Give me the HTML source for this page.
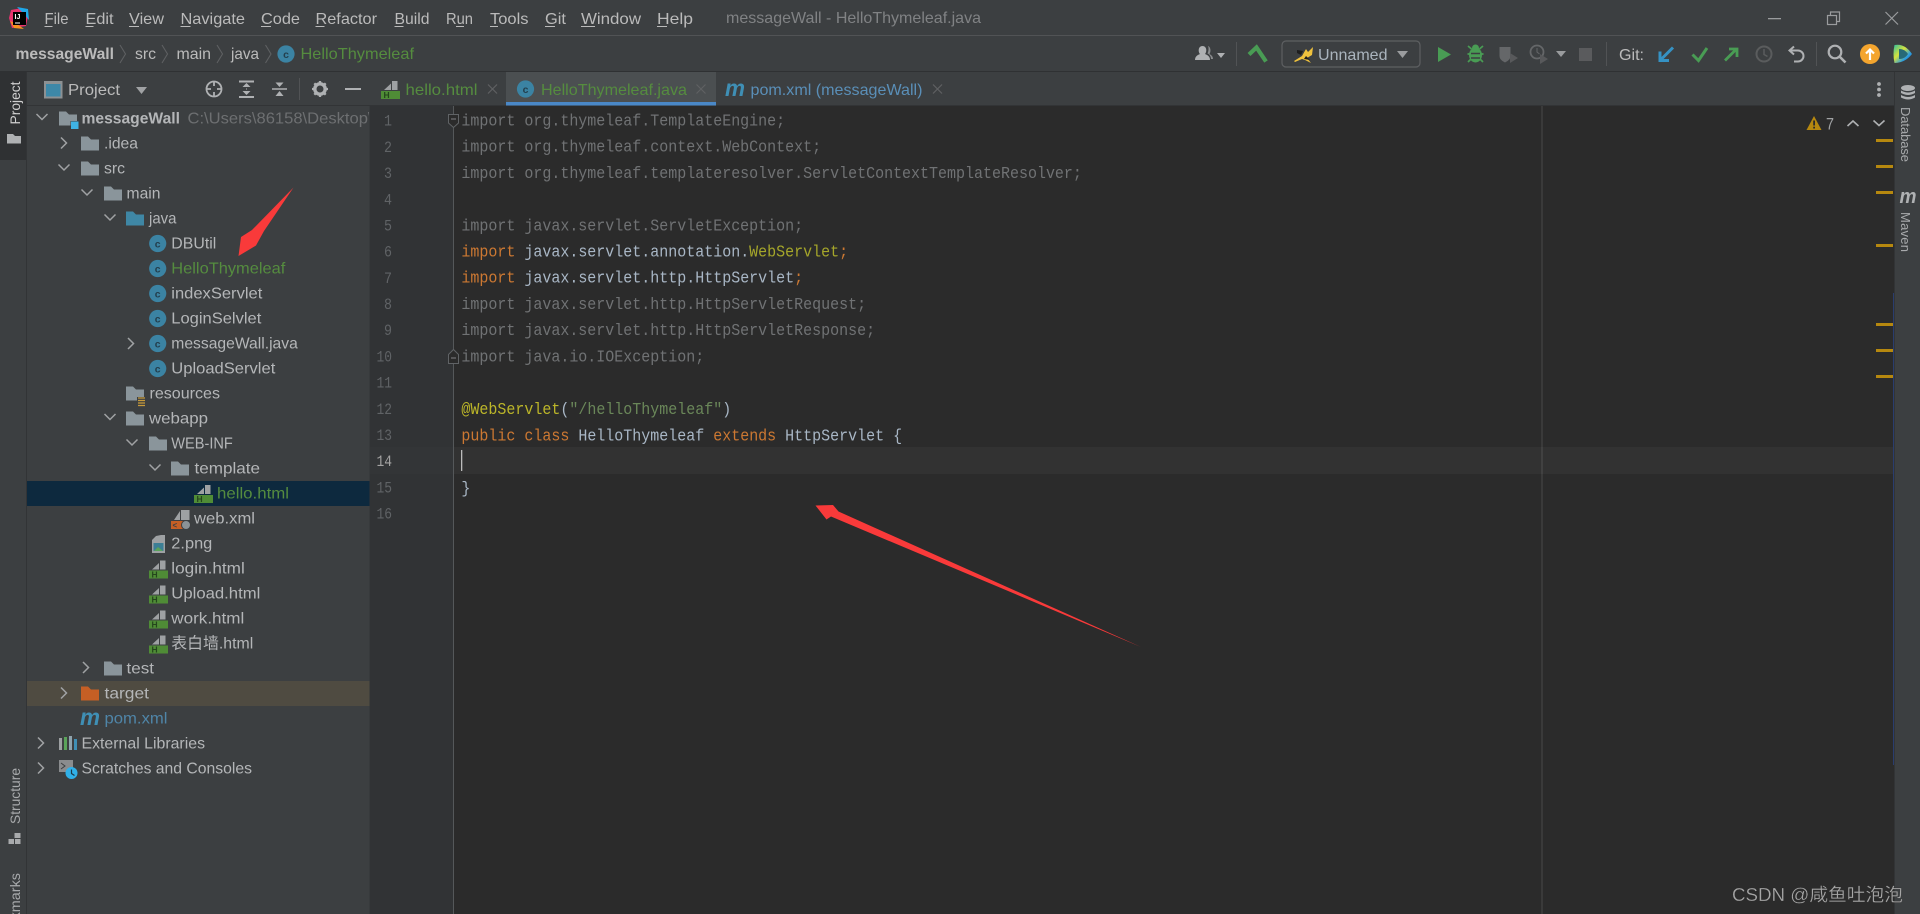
<!DOCTYPE html>
<html><head><meta charset="utf-8"><title>messageWall - HelloThymeleaf.java</title>
<style>
html,body{margin:0;padding:0;width:1920px;height:914px;overflow:hidden;background:#3c3f41}
svg{display:block;position:absolute;left:0;top:0}
text{font-family:"Liberation Sans","Noto Sans CJK SC",sans-serif;white-space:pre}
.m{font-size:16px;fill:#bbbbbb}
.t{font-size:16px;fill:#b4b6b8}
.g{fill:#558c3f}
.n{font-family:"Liberation Mono",monospace;font-size:16px;fill:#606366}
.c{font-family:"Liberation Mono",monospace;font-size:17px;fill:#707274}
.o{fill:#cc7832}.w{fill:#a9b7c6}.y{fill:#a5a62a}.s{fill:#6a8759}.b{fill:#bbb529}
</style></head><body>
<svg width="1920" height="914" viewBox="0 0 1920 914" xmlns="http://www.w3.org/2000/svg">
<defs>
<path id="fo" d="M0 0h7l3 3h8v11H0z"/>
<polyline id="cr" points="-3,-5.5 2.5,0 -3,5.5" fill="none" stroke="#a0a2a4" stroke-width="1.5"/>
<polyline id="cd" points="-5.5,-3 0,2.5 5.5,-3" fill="none" stroke="#a0a2a4" stroke-width="1.5"/>
<g id="ci"><circle r="8.6" fill="#3b83a3"/><text y="3.8" text-anchor="middle" font-size="10.5" fill="#233f4d" font-weight="bold">c</text></g>
<g id="ht"><path d="M3 9L10 2.500V9zM11 0h5.500v9H11z" fill="#9ea1a3"/><rect y="10" width="19" height="8" fill="#4f8c36"/><text x="2.500" y="17.200" font-size="8.500" font-weight="bold" fill="#24461c">H</text></g>
<path id="xx" d="M-4.500 -4.500L4.500 4.500M4.500 -4.500L-4.500 4.500" stroke="#5f6163" stroke-width="1.200" fill="none"/>
<linearGradient id="gr" x1="0" y1="0" x2="1" y2="1"><stop offset="0" stop-color="#2fc0a0"/><stop offset=".4" stop-color="#d6e23c"/><stop offset=".7" stop-color="#2a9be0"/><stop offset="1" stop-color="#1a70c8"/></linearGradient>
</defs>

<!-- base -->
<rect width="1920" height="914" fill="#3c3f41"/>
<rect x="0" y="35" width="1920" height="1" fill="#515355"/>
<rect x="0" y="71" width="1920" height="1" fill="#2f3133"/>

<!-- app logo -->
<g>
<path d="M11 10L22 8 28 16 26 26 12 28 9 18z" fill="#e8336e"/>
<path d="M17 7L28 9 29 20 24 14z" fill="#1ea7e8"/>
<path d="M10 21L14 28 24 29 17 24z" fill="#f7931e"/>
<rect x="13" y="12" width="13" height="13" fill="#000"/>
<text x="14.500" y="19" font-size="7" font-weight="bold" fill="#fff">IJ</text>
<rect x="15" y="22.500" width="5" height="1" fill="#fff"/>
</g>

<!-- menu -->
<text x="44.500" y="24" textLength="24" lengthAdjust="spacingAndGlyphs" class="m">File</text>
<text x="85.500" y="24" textLength="28" lengthAdjust="spacingAndGlyphs" class="m">Edit</text>
<text x="129" y="24" textLength="35" lengthAdjust="spacingAndGlyphs" class="m">View</text>
<text x="180.500" y="24" textLength="64.500" lengthAdjust="spacingAndGlyphs" class="m">Navigate</text>
<text x="261" y="24" textLength="39" lengthAdjust="spacingAndGlyphs" class="m">Code</text>
<text x="315.500" y="24" textLength="61.500" lengthAdjust="spacingAndGlyphs" class="m">Refactor</text>
<text x="394.500" y="24" textLength="35" lengthAdjust="spacingAndGlyphs" class="m">Build</text>
<text x="446" y="24" textLength="27" lengthAdjust="spacingAndGlyphs" class="m">Run</text>
<text x="490" y="24" textLength="38.500" lengthAdjust="spacingAndGlyphs" class="m">Tools</text>
<text x="545" y="24" textLength="21" lengthAdjust="spacingAndGlyphs" class="m">Git</text>
<text x="581" y="24" textLength="60" lengthAdjust="spacingAndGlyphs" class="m">Window</text>
<text x="657" y="24" textLength="36" lengthAdjust="spacingAndGlyphs" class="m">Help</text>
<g fill="#bbbbbb">
<rect x="44.500" y="26" width="8" height="1"/><rect x="85.500" y="26" width="8" height="1"/><rect x="129" y="26" width="10" height="1"/><rect x="180.500" y="26" width="10" height="1"/><rect x="261" y="26" width="10" height="1"/><rect x="315.500" y="26" width="9" height="1"/><rect x="394.500" y="26" width="9" height="1"/><rect x="456" y="26" width="8" height="1"/><rect x="490" y="26" width="8" height="1"/><rect x="545" y="26" width="10" height="1"/><rect x="581" y="26" width="14" height="1"/><rect x="657" y="26" width="10" height="1"/>
</g>
<text x="726" y="23" textLength="255" lengthAdjust="spacingAndGlyphs" font-size="16" fill="#808284">messageWall - HelloThymeleaf.java</text>

<!-- window controls -->
<rect x="1768" y="18" width="13" height="1.300" fill="#9a9c9e"/>
<rect x="1827.500" y="15.500" width="9" height="9" fill="none" stroke="#9a9c9e" stroke-width="1.200"/>
<path d="M1830.500 15v-3h9v9.500h-3" fill="none" stroke="#9a9c9e" stroke-width="1.200"/>
<path d="M1885.500 12L1898 24.500M1898 12L1885.500 24.500" stroke="#9a9c9e" stroke-width="1.200"/>

<!-- breadcrumb -->
<text x="15.500" y="59" textLength="98.500" lengthAdjust="spacingAndGlyphs" font-size="16" font-weight="bold" fill="#bbbbbb">messageWall</text>
<text x="135" y="59" textLength="21" lengthAdjust="spacingAndGlyphs" class="m">src</text>
<text x="176.500" y="59" textLength="34.500" lengthAdjust="spacingAndGlyphs" class="m">main</text>
<text x="231" y="59" textLength="28" lengthAdjust="spacingAndGlyphs" class="m">java</text>
<path d="M120 45l5.500 9-5.500 9M162 45l5.500 9-5.500 9M217 45l5.500 9-5.500 9M265.500 45l5.500 9-5.500 9" fill="none" stroke="#5e6062" stroke-width="1.100"/>
<use href="#ci" x="286" y="54"/>
<text x="300.500" y="59" textLength="113.500" lengthAdjust="spacingAndGlyphs" font-size="16" class="g">HelloThymeleaf</text>

<!-- toolbar -->
<g fill="#afb1b3">
<path d="M1195 60c0-4 3-5 5-6-2-2-2-8 2.500-8s4.500 6 2.500 8c2 1 5 2 5 6z"/>
<path d="M1208 46c3 1 3 6 1.500 8 1.500 1 3.500 2 3.500 5h-2c0-3-2-5-3.500-5.500 1-2 1.500-5.500.5-7.500z" fill="#8a8c8e"/>
<path d="M1217 53h8l-4 5z"/>
</g>
<rect x="1236" y="42" width="1" height="24" fill="#515355"/>
<path d="M1249 54.500L1256.500 47.500 1266 61.500" stroke="#499c54" stroke-width="4.200" fill="none"/>
<rect x="1282" y="41" width="138" height="26" rx="4" fill="#3c3f41" stroke="#5e6062" stroke-width="1.200"/>
<path d="M1294 61l8-5 4-7 2 3 5-5-1 8-5 3 4 5-6-3-3-1-7 3z" fill="#eec13d"/>
<path d="M1297 50l6 1-2 4-4-2zM1306 56l4 4-6-1z" fill="#1d1d1d"/>
<text x="1318" y="60" textLength="69.500" lengthAdjust="spacingAndGlyphs" class="m" style="fill:#aab4bd">Unnamed</text>
<path d="M1397 51h11l-5.500 7z" fill="#9a9c9e"/>
<path d="M1438 47l13 7.500-13 7.500z" fill="#499c54"/>
<g fill="#499c54">
<ellipse cx="1475.500" cy="55" rx="6.500" ry="7.500"/>
<circle cx="1475.500" cy="48" r="3.500"/>
</g>
<path d="M1468 46l3.500 3M1483 46l-3.500 3M1467.500 54h16M1468 62l3-3M1483 62l-3-3" stroke="#499c54" stroke-width="1.700" fill="none"/>
<path d="M1471 53.500h9M1471 58h9" stroke="#3c3f41" stroke-width="1.400"/>
<path d="M1499.500 47h11v9q0 4-5.500 6.500q-5.500-2.500-5.500-6.500z" fill="#656769"/>
<path d="M1510 53l8 5-8 5z" fill="#58595b"/>
<circle cx="1537" cy="52" r="6.500" fill="none" stroke="#656769" stroke-width="1.800"/>
<path d="M1537 48v4l2.500 2" stroke="#656769" fill="none"/>
<path d="M1540 54l8 5-8 5z" fill="#58595b"/>
<path d="M1556 51h10l-5 6z" fill="#9a9c9e"/>
<rect x="1579" y="48" width="13" height="13" fill="#5a5b5d"/>
<rect x="1606" y="42" width="1" height="24" fill="#515355"/>
<text x="1619" y="60" textLength="25" lengthAdjust="spacingAndGlyphs" class="m">Git:</text>
<path d="M1673 47.500L1661.500 59" stroke="#3592c4" stroke-width="3" fill="none"/>
<path d="M1660 51.500V60.500H1669" stroke="#3592c4" stroke-width="3" fill="none"/>
<path d="M1692.500 54.500L1698.500 60.500 1707 48" stroke="#499c54" stroke-width="3" fill="none"/>
<path d="M1725 60.500L1736 49.500M1729 49H1737V57" stroke="#499c54" stroke-width="2.800" fill="none"/>
<circle cx="1764" cy="54" r="7.500" fill="none" stroke="#5a5c5d" stroke-width="2"/>
<path d="M1764 49v5.500l3.500 2" stroke="#5a5c5d" stroke-width="1.500" fill="none"/>
<path d="M1794 46.500l-4.500 4 4.500 4" fill="none" stroke="#afb1b3" stroke-width="2"/>
<path d="M1790 50.500h8a5.500 5.500 0 0 1 0 11h-4" fill="none" stroke="#afb1b3" stroke-width="2"/>
<rect x="1816" y="42" width="1" height="24" fill="#515355"/>
<circle cx="1835" cy="52" r="6.300" fill="none" stroke="#afb1b3" stroke-width="2.200"/>
<path d="M1840 57l5.500 5.500" stroke="#afb1b3" stroke-width="2.600"/>
<circle cx="1870" cy="54" r="10" fill="#f4a52e"/>
<path d="M1870 60v-10M1866 53.500l4-4 4 4" stroke="#fff" stroke-width="2.200" fill="none"/>
<path d="M1894.500 45q10-2 17.500 9q-7 9-17.500 9q-2-9 0-18z" fill="url(#gr)"/>
<path d="M1899 49q6 0 9 5q-3 5-9 5z" fill="#276a78"/>

<!-- left stripe -->
<rect x="0" y="72" width="26" height="88" fill="#2f3133"/>
<rect x="26" y="72" width="1" height="842" fill="#323436"/>
<text transform="translate(20,124.500) rotate(-90)" textLength="43" lengthAdjust="spacingAndGlyphs" font-size="14" fill="#d0d0d0">Project</text>
<path d="M7 134h6l2 2h6v7.500H7z" fill="#afb1b3"/>
<text transform="translate(20,824) rotate(-90)" textLength="56" lengthAdjust="spacingAndGlyphs" font-size="14" fill="#a8aaac">Structure</text>
<path d="M14.500 833h6v5h-6zM8.500 839h5.500v5h-5.500zM15 839h5.500v5H15z" fill="#a8aaac"/>
<text transform="translate(20,945) rotate(-90)" textLength="72" lengthAdjust="spacingAndGlyphs" font-size="14" fill="#a8aaac">Bookmarks</text>

<!-- project header -->
<rect x="27" y="105" width="343" height="1" fill="#323436"/>
<rect x="45" y="82" width="16.500" height="15.500" fill="#3d88a8" stroke="#8d9193" stroke-width="2"/>
<rect x="45" y="81" width="16.500" height="3" fill="#8d9193"/>
<text x="68" y="95" textLength="52" lengthAdjust="spacingAndGlyphs" class="m">Project</text>
<path d="M136 87h11l-5.500 7z" fill="#a0a2a4"/>
<g fill="none" stroke="#afb1b3" stroke-width="1.800">
<circle cx="214" cy="89" r="7.500"/>
<path d="M214 81.500v4.500M214 92v4.500M206.500 89h4.500M217 89h4.500"/>
<path d="M239 81.500h15M239 97h15" stroke-width="2"/>
<path d="M272 89h15" stroke-width="1.500"/>
</g>
<path d="M246.500 83l4 4h-8zM246.500 95l4-4h-8z" fill="#afb1b3"/>
<path d="M246 88.500h1v1h-1z" fill="#afb1b3"/>
<path d="M279.500 87l-4-4.500h8zM279.500 91l4 5h-8z" fill="#afb1b3"/>
<rect x="299" y="78" width="1" height="22" fill="#515355"/>
<circle cx="320" cy="89" r="5.200" fill="none" stroke="#afb1b3" stroke-width="3.400"/>
<path d="M320 81v2.500M320 94.500v2.500M312 89h2.500M325.500 89h2.500M314.300 83.300l1.800 1.800M323.900 92.900l1.800 1.800M314.300 94.700l1.800-1.800M323.900 85.100l1.800-1.800" stroke="#afb1b3" stroke-width="2.300"/>
<rect x="345" y="88" width="16" height="2" fill="#afb1b3"/>

<!-- tabs -->
<rect x="370" y="72" width="1525" height="33" fill="#3c3f41"/>
<rect x="370" y="105" width="1525" height="1" fill="#323436"/>
<rect x="506" y="72" width="210" height="30" fill="#4b4f51"/>
<rect x="506" y="102" width="210" height="3.500" fill="#4a88c7"/>
<use href="#ht" x="381" y="81"/>
<text x="405.500" y="95" textLength="72" lengthAdjust="spacingAndGlyphs" font-size="16" class="g">hello.html</text>
<use href="#xx" x="492.500" y="89"/>
<use href="#ci" x="525.500" y="89"/>
<text x="541" y="95" textLength="146" lengthAdjust="spacingAndGlyphs" font-size="16" class="g">HelloThymeleaf.java</text>
<use href="#xx" x="701" y="89"/>
<text x="725" y="96" textLength="20" lengthAdjust="spacingAndGlyphs" font-size="23" font-weight="bold" font-style="italic" fill="#3f8fb5">m</text>
<text x="750.500" y="95" textLength="172" lengthAdjust="spacingAndGlyphs" font-size="16" fill="#5a8fb8">pom.xml (messageWall)</text>
<use href="#xx" x="937.500" y="89"/>
<circle cx="1879" cy="84" r="1.900" fill="#afb1b3"/><circle cx="1879" cy="89.500" r="1.900" fill="#afb1b3"/><circle cx="1879" cy="95" r="1.900" fill="#afb1b3"/>

<!-- tree -->
<rect x="27" y="481" width="342.500" height="25" fill="#0d293e"/>
<rect x="27" y="681" width="342.500" height="25" fill="#4f4b41"/>
<rect x="369.500" y="106" width="1" height="808" fill="#323436"/>

<g fill="#8a959b">
<use href="#fo" x="59" y="111.500"/><use href="#fo" x="81" y="136.500"/><use href="#fo" x="81" y="161.500"/><use href="#fo" x="104" y="186.500"/>
<use href="#fo" x="126" y="386.500"/><use href="#fo" x="126" y="411.500"/><use href="#fo" x="149" y="436.500"/><use href="#fo" x="171" y="461.500"/>
<use href="#fo" x="104" y="661.500"/>
</g>
<rect x="70.500" y="121" width="8" height="8" fill="#3c3f41"/>
<rect x="71" y="121.500" width="7.500" height="7.500" fill="#3fb3e4"/>
<use href="#fo" x="126" y="211.500" fill="#3f87a5"/>
<use href="#fo" x="81" y="686.500" fill="#c55f25"/>
<rect x="137" y="397" width="8" height="9" fill="#3c3f41"/>
<path d="M138 398h7M138 400.500h7M138 403h7M138 405.500h7" stroke="#c79a3b" stroke-width="1.300"/>

<use href="#cd" x="42" y="117"/><use href="#cr" x="64" y="143"/><use href="#cd" x="64" y="167.500"/><use href="#cd" x="87" y="192.500"/><use href="#cd" x="110" y="217.500"/>
<use href="#cr" x="131" y="343.500"/><use href="#cd" x="110" y="417"/><use href="#cd" x="132" y="442.500"/><use href="#cd" x="155" y="467.500"/>
<use href="#cr" x="86" y="667.500"/><use href="#cr" x="64" y="693"/><use href="#cr" x="41" y="743"/><use href="#cr" x="41" y="768"/>

<text x="81.500" y="123.500" textLength="98.500" lengthAdjust="spacingAndGlyphs" font-size="16" font-weight="bold" fill="#b4b6b8">messageWall</text>
<svg x="0" y="105" width="369" height="30"><text x="187.500" y="18.500" textLength="185" lengthAdjust="spacingAndGlyphs" font-size="16" fill="#6d6f71">C:\Users\86158\Desktop\</text></svg>
<text x="104" y="148.500" textLength="34" lengthAdjust="spacingAndGlyphs" class="t">.idea</text>
<text x="104" y="173.500" textLength="21" lengthAdjust="spacingAndGlyphs" class="t">src</text>
<text x="126.500" y="198.500" textLength="34" lengthAdjust="spacingAndGlyphs" class="t">main</text>
<text x="149" y="223.500" textLength="27.500" lengthAdjust="spacingAndGlyphs" class="t">java</text>
<use href="#ci" x="157.700" y="243.500"/><text x="171.300" y="248.500" textLength="45" lengthAdjust="spacingAndGlyphs" class="t">DBUtil</text>
<use href="#ci" x="157.700" y="268.500"/><text x="171.300" y="273.500" textLength="114" lengthAdjust="spacingAndGlyphs" font-size="16" class="g">HelloThymeleaf</text>
<use href="#ci" x="157.700" y="293.500"/><text x="171.300" y="298.500" textLength="91" lengthAdjust="spacingAndGlyphs" class="t">indexServlet</text>
<use href="#ci" x="157.700" y="318.500"/><text x="171.300" y="323.500" textLength="90" lengthAdjust="spacingAndGlyphs" class="t">LoginSelvlet</text>
<use href="#ci" x="157.700" y="343.500"/><text x="171.300" y="348.500" textLength="126.500" lengthAdjust="spacingAndGlyphs" class="t">messageWall.java</text>
<use href="#ci" x="157.700" y="368.500"/><text x="171.300" y="373.500" textLength="104" lengthAdjust="spacingAndGlyphs" class="t">UploadServlet</text>
<text x="149.500" y="398.500" textLength="70.500" lengthAdjust="spacingAndGlyphs" class="t">resources</text>
<text x="149" y="423.500" textLength="59" lengthAdjust="spacingAndGlyphs" class="t">webapp</text>
<text x="171.300" y="448.500" textLength="61.500" lengthAdjust="spacingAndGlyphs" class="t">WEB-INF</text>
<text x="194.500" y="473.500" textLength="65.500" lengthAdjust="spacingAndGlyphs" class="t">template</text>
<use href="#ht" x="194" y="485"/><text x="217" y="498.500" textLength="72" lengthAdjust="spacingAndGlyphs" font-size="16" class="g">hello.html</text>
<path d="M174 520L180 511V520zM181 510H189.500V520H181z" fill="#9ea1a3"/>
<rect x="171" y="521" width="15" height="8" fill="#c55f25"/>
<text x="172.500" y="528" font-size="8" font-weight="bold" fill="#3c3f41">&lt;</text>
<circle cx="186" cy="525" r="4.500" fill="#8b9296" stroke="#3c3f41"/>
<text x="194" y="523.500" textLength="61" lengthAdjust="spacingAndGlyphs" class="t">web.xml</text>
<path d="M156 536l5-1h4v18h-13v-13z" fill="#9ea1a3"/>
<rect x="153.500" y="543" width="10" height="8" fill="#3c7f95"/><path d="M154 551l4-4 5 4z" fill="#5aa35a"/>
<text x="171.300" y="548.500" textLength="41" lengthAdjust="spacingAndGlyphs" class="t">2.png</text>
<use href="#ht" x="149" y="560.500"/><text x="171.300" y="573.500" textLength="73.500" lengthAdjust="spacingAndGlyphs" class="t">login.html</text>
<use href="#ht" x="149" y="585.500"/><text x="171.300" y="598.500" textLength="89" lengthAdjust="spacingAndGlyphs" class="t">Upload.html</text>
<use href="#ht" x="149" y="610.500"/><text x="171.300" y="623.500" textLength="73" lengthAdjust="spacingAndGlyphs" class="t">work.html</text>
<use href="#ht" x="149" y="635.500"/><text x="171.300" y="648.500" textLength="82" lengthAdjust="spacingAndGlyphs" class="t">表白墙.html</text>
<text x="126.500" y="673.500" textLength="27.500" lengthAdjust="spacingAndGlyphs" class="t">test</text>
<text x="104.500" y="698.500" textLength="44.500" lengthAdjust="spacingAndGlyphs" class="t">target</text>
<text x="80" y="725" textLength="20" lengthAdjust="spacingAndGlyphs" font-size="23" font-weight="bold" font-style="italic" fill="#3f8fb5">m</text>
<text x="104.500" y="723.500" textLength="63" lengthAdjust="spacingAndGlyphs" font-size="16" fill="#4f85a8">pom.xml</text>
<g fill="#9da0a2"><rect x="59" y="738" width="3" height="12"/><rect x="69" y="736" width="3" height="14" fill="#8fa3ad"/><rect x="74" y="739" width="3" height="11" fill="#3f8fb5"/></g>
<rect x="64" y="737" width="3" height="13" fill="#5aa35a"/>
<text x="81.500" y="748.500" textLength="123.500" lengthAdjust="spacingAndGlyphs" class="t">External Libraries</text>
<path d="M59 760h14v12h-14z" fill="#8a8c8e"/><path d="M61 763l4 3-4 3" fill="none" stroke="#3c3f41"/>
<circle cx="71.500" cy="773" r="6" fill="#30b0e8"/><path d="M71.500 769.500v4l3 2" stroke="#1c3a4a" stroke-width="1.200" fill="none"/>
<text x="81.500" y="773.500" textLength="170.500" lengthAdjust="spacingAndGlyphs" class="t">Scratches and Consoles</text>

<!-- editor -->
<rect x="370" y="106" width="83" height="808" fill="#313335"/>
<rect x="453.500" y="106" width="1441" height="808" fill="#2b2b2b"/>
<rect x="370" y="447" width="83" height="27" fill="#333537"/>
<rect x="453.500" y="447" width="1441" height="27" fill="#323232"/>
<rect x="453" y="106" width="1" height="808" fill="#55585a"/>
<rect x="1541.500" y="106" width="1" height="808" fill="#4a4a4a"/>
<rect x="1541.500" y="447" width="1" height="27" fill="#505050"/>

<!-- line numbers -->
<g text-anchor="end">
<text x="392" y="125.500" class="n" textLength="8" lengthAdjust="spacingAndGlyphs">1</text><text x="392" y="152" class="n" textLength="8" lengthAdjust="spacingAndGlyphs">2</text><text x="392" y="178" class="n" textLength="8" lengthAdjust="spacingAndGlyphs">3</text><text x="392" y="204.500" class="n" textLength="8" lengthAdjust="spacingAndGlyphs">4</text><text x="392" y="230.500" class="n" textLength="8" lengthAdjust="spacingAndGlyphs">5</text><text x="392" y="256.500" class="n" textLength="8" lengthAdjust="spacingAndGlyphs">6</text><text x="392" y="283" class="n" textLength="8" lengthAdjust="spacingAndGlyphs">7</text><text x="392" y="309" class="n" textLength="8" lengthAdjust="spacingAndGlyphs">8</text><text x="392" y="335" class="n" textLength="8" lengthAdjust="spacingAndGlyphs">9</text>
<text x="392" y="361.500" class="n" textLength="15.500" lengthAdjust="spacingAndGlyphs">10</text><text x="392" y="387.500" class="n" textLength="15.500" lengthAdjust="spacingAndGlyphs">11</text><text x="392" y="414" class="n" textLength="15.500" lengthAdjust="spacingAndGlyphs">12</text><text x="392" y="440" class="n" textLength="15.500" lengthAdjust="spacingAndGlyphs">13</text>
<text x="392" y="466" class="n" textLength="15.500" lengthAdjust="spacingAndGlyphs" style="fill:#a4a3a3">14</text><text x="392" y="492.500" class="n" textLength="15.500" lengthAdjust="spacingAndGlyphs">15</text><text x="392" y="518.500" class="n" textLength="15.500" lengthAdjust="spacingAndGlyphs">16</text>
</g>

<!-- fold markers -->
<path d="M448.500 114.500h10v8.500l-5 4.500-5-4.500z" fill="#2b2b2b" stroke="#606366"/>
<path d="M451 119h5" stroke="#808284"/>
<path d="M448.500 363.500h10v-9l-5-5-5 5z" fill="#2b2b2b" stroke="#606366"/>
<path d="M451 358h5" stroke="#808284"/>

<!-- code -->
<g transform="translate(461.400,0) scale(.8824,1)">
<text y="125.500" class="c">import org.thymeleaf.TemplateEngine;</text>
<text y="151.500" class="c">import org.thymeleaf.context.WebContext;</text>
<text y="178" class="c">import org.thymeleaf.templateresolver.ServletContextTemplateResolver;</text>
<text y="230.500" class="c">import javax.servlet.ServletException;</text>
<text y="256.500" class="c"><tspan class="o">import</tspan><tspan class="w"> javax.servlet.annotation.</tspan><tspan class="y">WebServlet</tspan><tspan class="o">;</tspan></text>
<text y="282.500" class="c"><tspan class="o">import</tspan><tspan class="w"> javax.servlet.http.HttpServlet</tspan><tspan class="o">;</tspan></text>
<text y="309" class="c">import javax.servlet.http.HttpServletRequest;</text>
<text y="335" class="c">import javax.servlet.http.HttpServletResponse;</text>
<text y="361.500" class="c">import java.io.IOException;</text>
<text y="414" class="c"><tspan class="b">@WebServlet</tspan><tspan class="w">(</tspan><tspan class="s">"/helloThymeleaf"</tspan><tspan class="w">)</tspan></text>
<text y="440.500" class="c"><tspan class="o">public class</tspan><tspan class="w"> HelloThymeleaf </tspan><tspan class="o">extends</tspan><tspan class="w"> HttpServlet {</tspan></text>
<text y="493" class="c"><tspan class="w">}</tspan></text>
</g>
<rect x="461" y="450" width="1.300" height="21" fill="#bbbbbb"/>

<!-- inspections -->
<path d="M1814 116l7.500 14h-15z" fill="#b6880f"/>
<rect x="1813.200" y="120.500" width="1.800" height="5" fill="#2b2b2b"/><rect x="1813.200" y="126.700" width="1.800" height="1.800" fill="#2b2b2b"/>
<text x="1826" y="129.500" textLength="8" lengthAdjust="spacingAndGlyphs" font-size="17" fill="#a0a2a4">7</text>
<path d="M1847.500 126l5.500-5 5.500 5M1873.500 120.500l5.500 5 5.500-5" fill="none" stroke="#afb1b3" stroke-width="1.600"/>
<g fill="#b6880f">
<rect x="1876" y="139" width="17" height="3"/><rect x="1876" y="165" width="17" height="3"/><rect x="1876" y="191" width="17" height="3"/><rect x="1876" y="244" width="17" height="3"/><rect x="1876" y="323" width="17" height="3"/><rect x="1876" y="349" width="17" height="3"/><rect x="1876" y="375" width="17" height="3"/>
</g>
<rect x="1893" y="293" width="1" height="472" fill="#2a3d6e"/>

<!-- right stripe -->
<rect x="1894" y="72" width="26" height="842" fill="#3c3f41"/>
<rect x="1894" y="72" width="1" height="842" fill="#323436"/>
<g fill="#afb1b3">
<ellipse cx="1908" cy="88" rx="7" ry="3"/>
<path d="M1901 90.500q7 4 14 0v2.500q-7 4-14 0zM1901 95q7 4 14 0v2.500q-7 4-14 0z"/>
</g>
<text transform="translate(1901,107) rotate(90)" textLength="55" lengthAdjust="spacing" font-size="13" fill="#a8aaac">Database</text>
<text x="1899.500" y="203" textLength="17" lengthAdjust="spacingAndGlyphs" font-size="20" font-weight="bold" font-style="italic" fill="#afb1b3">m</text>
<text transform="translate(1901,212) rotate(90)" textLength="40" lengthAdjust="spacing" font-size="13" fill="#a8aaac">Maven</text>

<!-- annotations -->
<path d="M293.500 187.500L264 231 256 245.500 238.500 256 241 237 252 230z" fill="#f93a3a"/>
<path d="M815.500 505.500L833 505 838.500 511.500 1141 647 831 516.500 826.500 519.500z" fill="#f93a3a"/>

<!-- watermark -->
<text x="1732" y="901" textLength="171" lengthAdjust="spacingAndGlyphs" font-size="18" fill="#a6a6a6" stroke="#1e1e1e" stroke-width=".2">CSDN @咸鱼吐泡泡</text>
</svg>
</body></html>
